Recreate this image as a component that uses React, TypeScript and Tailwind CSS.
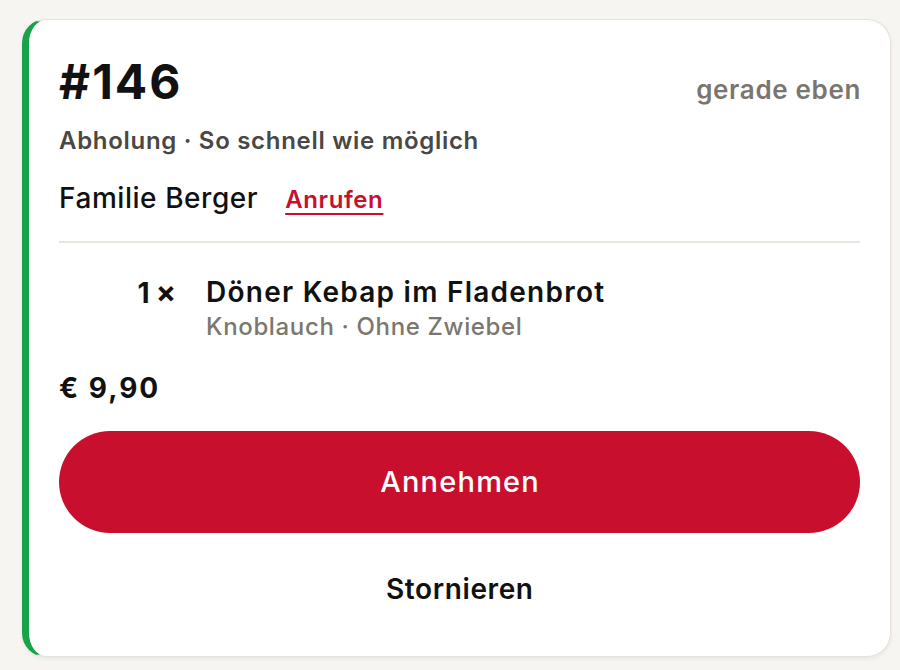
import React from "react";

export default function App() {
  return (
    <div
      className="min-h-screen w-full bg-[#f7f5f1] pt-[19px] pl-[22px]"
      style={{ fontFamily: "Inter, 'Noto Sans', sans-serif" }}
    >
      <div className="flex h-[638px] w-[869px] flex-col rounded-[24px] border border-l-[7px] border-[#e6e2db] border-l-[#16a34a] bg-white px-[30px] pt-[38px] shadow-[0_2px_4px_rgba(0,0,0,0.06)]">
        <div className="flex items-baseline justify-between">
          <div className="text-[48px] font-bold leading-[48px] tracking-[2px] text-[#111111]">#146</div>
          <div className="mr-[-1px] text-[26px] font-semibold leading-[26px] tracking-[0.65px] text-[#7a766f]">
            gerade eben
          </div>
        </div>
        <div className="mt-[23px] text-[24px] font-semibold leading-[24px] tracking-[0.7px] text-[#4a4744]">
          Abholung · So schnell wie möglich
        </div>
        <div className="mt-[31px] flex items-baseline gap-[27px]">
          <span className="text-[28px] font-medium leading-[28px] tracking-[0.55px] text-[#111111]">Familie Berger</span>
          <button className="text-[24px] font-semibold leading-[24px] tracking-[0.6px] text-[#c8102e] underline decoration-2 underline-offset-[5px]">
            Anrufen
          </button>
        </div>
        <div className="mt-[29px] h-[2px] w-full bg-[#e8e5df]" />
        <div className="mt-[35px] flex">
          <div className="flex w-[117px] shrink-0 items-baseline justify-end gap-[6px] text-[28px] font-bold leading-[28px] text-[#111111]">
            <span>1</span>
            <span className="text-[30px]">×</span>
          </div>
          <div className="ml-[30px] flex flex-col">
            <div className="text-[28px] font-semibold leading-[28px] tracking-[1.25px] text-[#111111]">
              Döner Kebap im Fladenbrot
            </div>
            <div className="mt-[9px] text-[24px] font-medium leading-[24px] tracking-[0.65px] text-[#7b776f]">
              Knoblauch · Ohne Zwiebel
            </div>
          </div>
        </div>
        <div className="mt-[35px] text-[28px] font-bold leading-[28px] tracking-[2px] text-[#111111]">€ 9,90</div>
        <button className="mt-[29px] flex h-[102px] w-full items-center justify-center rounded-full bg-[#c8102e] text-[29px] font-medium tracking-[1.2px] text-white">
          <span className="mr-[-1.2px]">Annehmen</span>
        </button>
        <button className="mt-[42px] w-full text-center text-[28px] font-semibold leading-[28px] tracking-[0.6px] text-[#111111]">
          <span className="mr-[-0.6px]">Stornieren</span>
        </button>
      </div>
    </div>
  );
}
